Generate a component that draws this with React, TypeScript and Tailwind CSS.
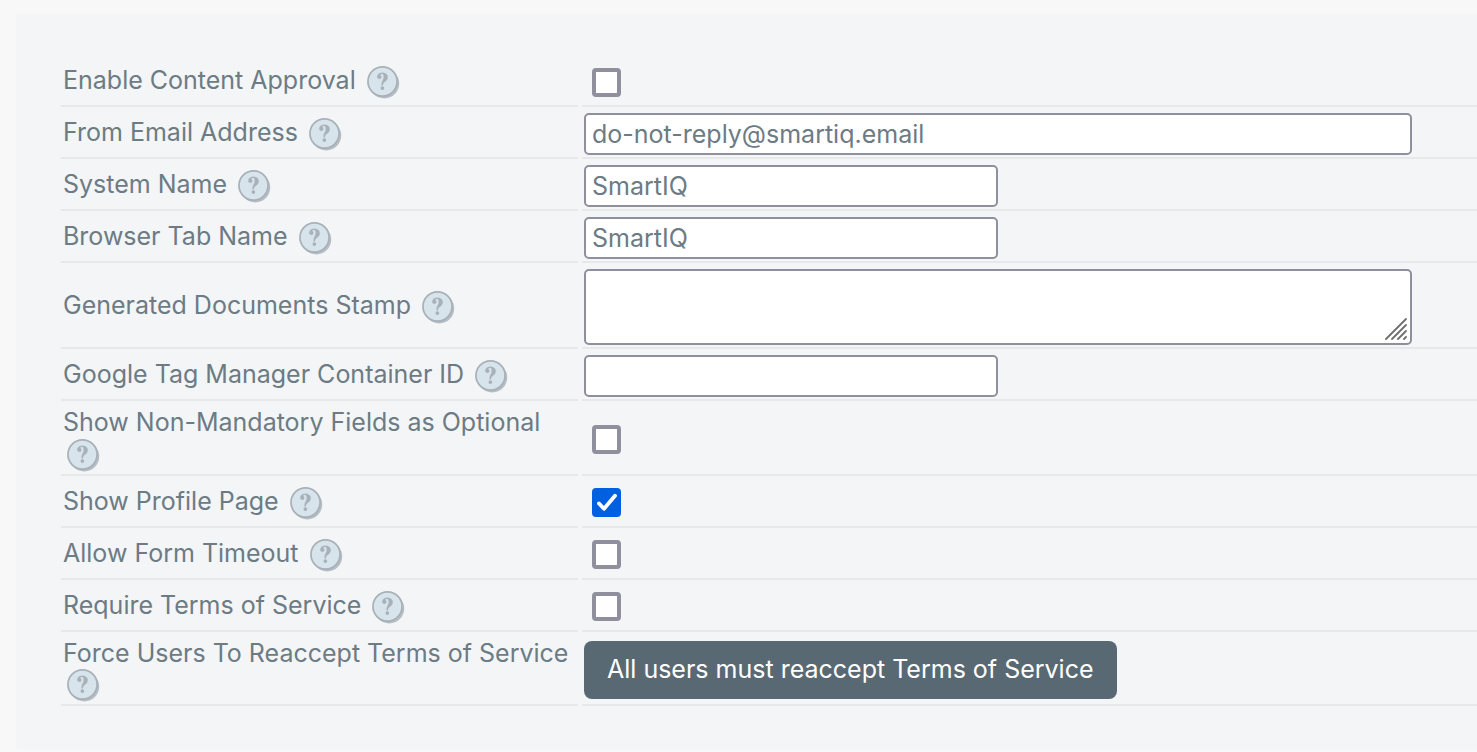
import type { ReactNode } from "react";

type Setting = {
  id: string;
  label: string;
  kind: "checkbox" | "text" | "textarea" | "button";
  value?: string;
  checked?: boolean;
  wide?: boolean;
};

const settings: Setting[] = [
  { id: "content-approval", label: "Enable Content Approval", kind: "checkbox" },
  { id: "from-email", label: "From Email Address", kind: "text", value: "do-not-reply@smartiq.email", wide: true },
  { id: "system-name", label: "System Name", kind: "text", value: "SmartIQ" },
  { id: "tab-name", label: "Browser Tab Name", kind: "text", value: "SmartIQ" },
  { id: "documents-stamp", label: "Generated Documents Stamp", kind: "textarea" },
  { id: "gtm-container", label: "Google Tag Manager Container ID", kind: "text", value: "" },
  { id: "show-optional", label: "Show Non-Mandatory Fields as Optional", kind: "checkbox" },
  { id: "profile-page", label: "Show Profile Page", kind: "checkbox", checked: true },
  { id: "form-timeout", label: "Allow Form Timeout", kind: "checkbox" },
  { id: "require-terms", label: "Require Terms of Service", kind: "checkbox" },
  { id: "reaccept-terms", label: "Force Users To Reaccept Terms of Service", kind: "button", value: "All users must reaccept Terms of Service" },
];

function HelpButton({ label }: { label: string }) {
  return (
    <button type="button" aria-label={`Help: ${label}`} className="mx-1 inline-block size-[33px] cursor-pointer align-middle">
      <svg viewBox="0 0 34 34" className="size-full" aria-hidden="true">
        <circle cx="17.8" cy="18" r="15.4" fill="#b7bdc5" />
        <circle cx="16" cy="16" r="15" fill="#d8e4ec" stroke="#a7b1b7" strokeWidth="1.8" />
        <path d="M10.6 11.4C10.6 8.6 12.8 7 15.8 7C19.1 7 21.3 8.8 21.3 11.5C21.3 13.8 19.9 15 18.3 16.2C17 17.2 16.4 18 16.4 19.8H15.1C15 17.5 15.4 16.3 16.2 14.9C16.9 13.6 17.3 12.8 17.3 11.2C17.3 9.2 16.7 8 15.3 8C14.4 8 13.7 8.5 13.7 9C13.7 9.6 14.7 10 14.7 11.3C14.7 12.5 13.9 13.2 12.8 13.2C11.5 13.2 10.6 12.5 10.6 11.4Z" fill="#a7b1b7" stroke="#a7b1b7" strokeWidth="0.3" />
        <circle cx="15.8" cy="22.7" r="1.9" fill="#a7b1b7" />
      </svg>
    </button>
  );
}

function Checkbox({ id, checked }: { id: string; checked?: boolean }) {
  return (
    <span className="relative ml-2 block size-[29px]">
      <input
        id={id}
        type="checkbox"
        defaultChecked={checked}
        className="peer block size-full appearance-none rounded border-4 border-[#8f8f9d] bg-white checked:border-[#0060df] checked:bg-[#0060df]"
      />
      <svg viewBox="0 0 29 29" className="pointer-events-none absolute inset-0 hidden size-full peer-checked:block" aria-hidden="true">
        <path d="M7 15.5L12 20.8L23 7.8" fill="none" stroke="#fff" strokeWidth="3.8" strokeLinecap="round" strokeLinejoin="round" />
      </svg>
    </span>
  );
}

function Field({ item }: { item: Setting }) {
  if (item.kind === "checkbox") return <Checkbox id={item.id} checked={item.checked} />;

  if (item.kind === "textarea") {
    return (
      <div className="relative mr-4 w-full max-w-[828px]">
        <textarea id={item.id} className="block h-[76px] w-full resize-none rounded-[5px] border-2 border-[#8f8f9d] bg-white px-1.5 py-1" />
        <svg viewBox="0 0 22 22" className="pointer-events-none absolute right-[5px] bottom-[5px] size-[22px]" aria-hidden="true">
          <path d="M1 21L21 1M7 21L21 7M13 21L21 13M19 21L21 19" stroke="#6f6f6f" strokeWidth="1.8" strokeLinecap="round" />
        </svg>
      </div>
    );
  }

  if (item.kind === "button") {
    return (
      <button id={item.id} type="button" className="h-[58px] rounded-lg bg-[#596973] px-[23px] whitespace-nowrap text-white">
        {item.value}
      </button>
    );
  }

  return (
    <input
      id={item.id}
      type="text"
      defaultValue={item.value}
      className={`block h-[42px] w-full rounded-[5px] border-2 border-[#8f8f9d] bg-white px-1.5 ${item.wide ? "mr-4 max-w-[828px]" : "max-w-[414px]"}`}
    />
  );
}

function Row({ item, children }: { item: Setting; children: ReactNode }) {
  return (
    <div className="grid min-h-[52px] grid-cols-[517px_1fr] gap-1">
      <div className="flex items-center border-b-2 border-[#e6e8ea] px-0.5 pt-1.5 pb-0.5">
        <div className="leading-[31px]">
          <label htmlFor={item.id}>{item.label}</label> <HelpButton label={item.label} />
        </div>
      </div>
      <div className="flex items-center border-b-2 border-[#e6e8ea] px-0.5 pt-1.5 pb-0.5">{children}</div>
    </div>
  );
}

export default function App() {
  return (
    <main className="min-h-screen bg-[#f8f8f8] pt-3.5 pl-4 font-['Inter',sans-serif] text-[25px] text-[#6c7b84]">
      <form className="rounded-l bg-[#f3f5f7] pt-[41px] pb-11 pl-[45px]">
        {settings.map((item) => (
          <Row key={item.id} item={item}>
            <Field item={item} />
          </Row>
        ))}
      </form>
    </main>
  );
}
